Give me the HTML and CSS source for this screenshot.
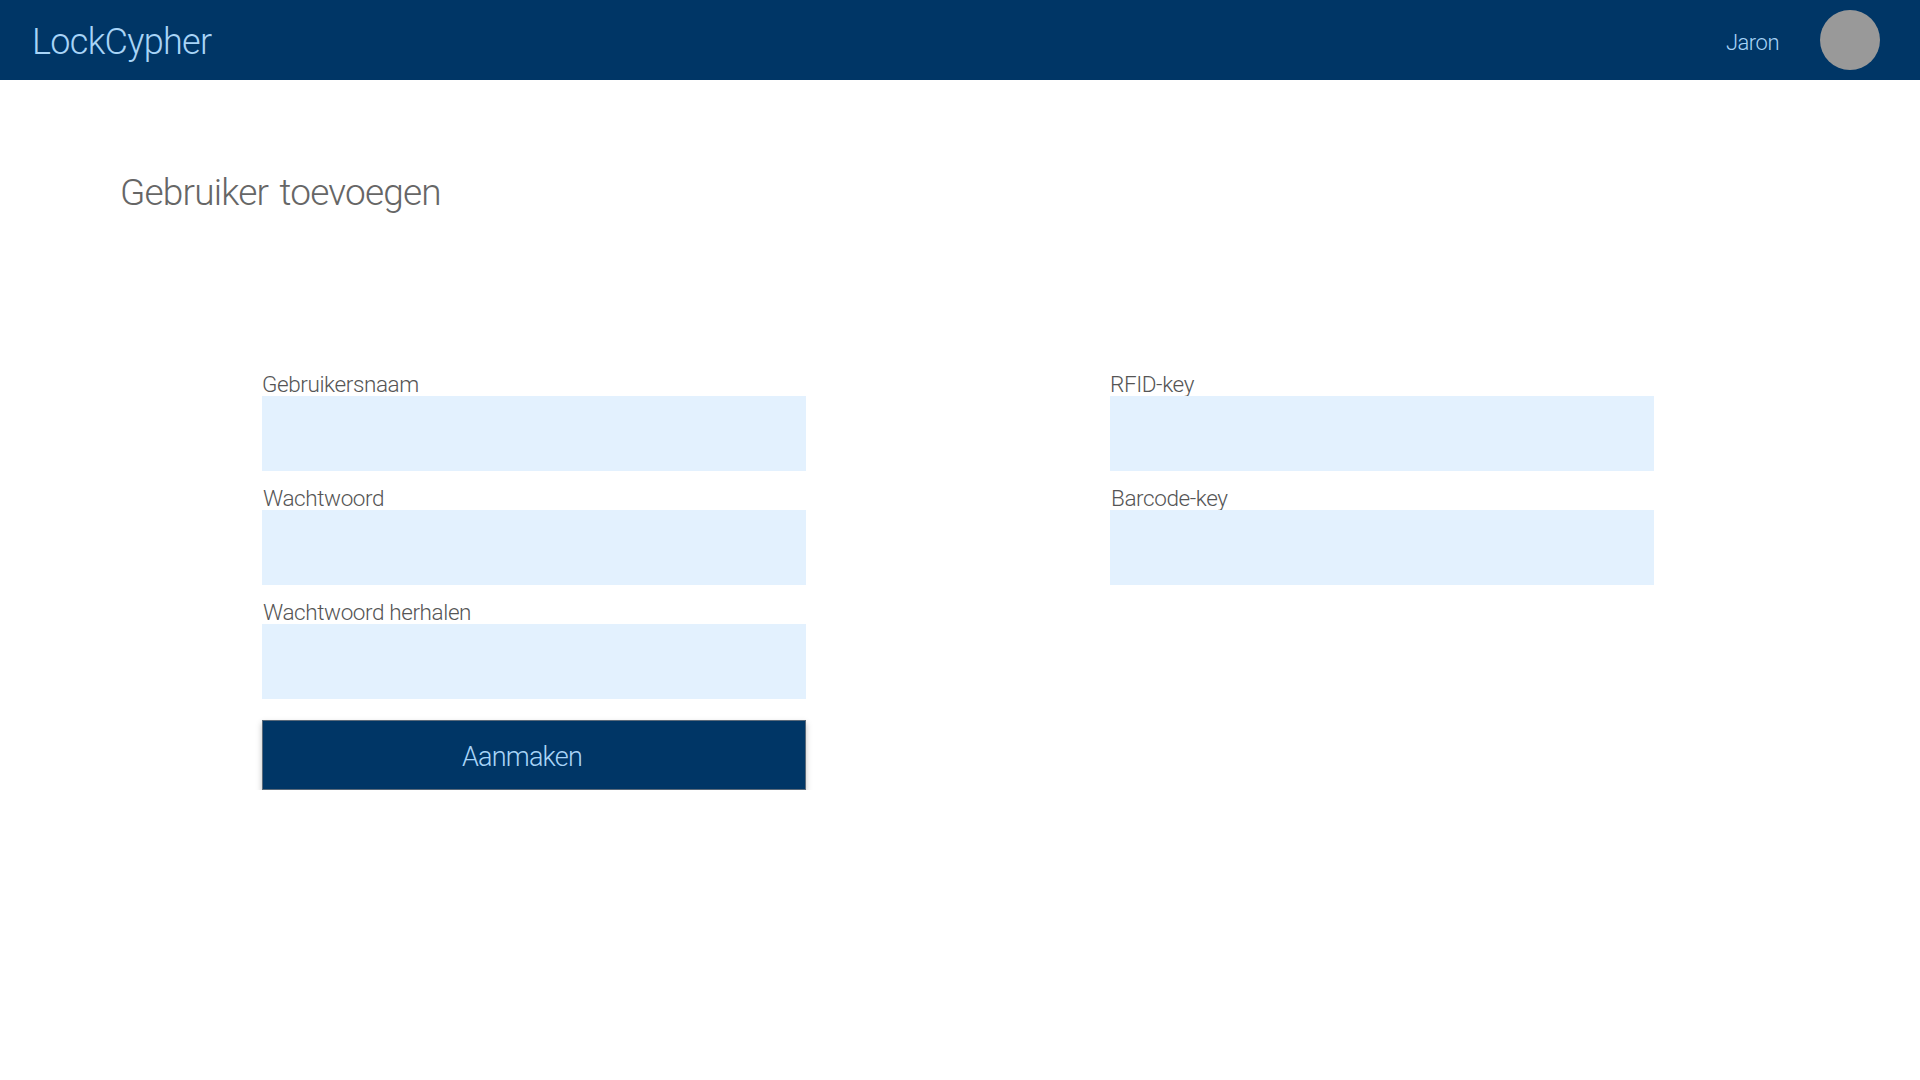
FILE: index.html
```html
<!DOCTYPE html>
<html lang="nl">
<head>
    <meta charset="UTF-8">
    <title>LockCypher | Gebruiker toevoegen</title>
    <link rel="stylesheet" href="styles.css">
</head>
<body>
    <header class="topbar">
        <div class="logo">LockCypher</div>
        <div class="user">
            <span class="user-name">Jaron</span>
            <div class="avatar"></div>
        </div>
    </header>
    <main class="content">
        <h1 class="title">Gebruiker toevoegen</h1>
        <form class="user-form">
            <div class="col">
                <div class="field">
                    <label for="username">Gebruikersnaam</label>
                    <input type="text" id="username">
                </div>
                <div class="field shifted">
                    <label for="password">Wachtwoord</label>
                    <input type="password" id="password">
                </div>
                <div class="field shifted">
                    <label for="password-repeat">Wachtwoord herhalen</label>
                    <input type="password" id="password-repeat">
                </div>
                <button class="submit" type="button">Aanmaken</button>
            </div>
            <div class="col">
                <div class="field">
                    <label for="rfid">RFID-key</label>
                    <input type="text" id="rfid">
                </div>
                <div class="field shifted">
                    <label for="barcode">Barcode-key</label>
                    <input type="text" id="barcode">
                </div>
            </div>
        </form>
    </main>
</body>
</html>
```

FILE: styles.css
```css
* {
    margin: 0;
    padding: 0;
    box-sizing: border-box;
}
body {
    background: #fff;
    font-family: Roboto, sans-serif;
    font-weight: 300;
}
.topbar {
    height: 80px;
    background: #003666;
    color: #a8d4f7;
    display: flex;
    align-items: center;
    justify-content: space-between;
    padding: 0 40px 0 32px;
}
.logo {
    font-size: 36px;
    letter-spacing: -0.7px;
    padding-top: 4px;
}
.user {
    display: flex;
    align-items: center;
    gap: 41px;
}
.user-name {
    font-size: 22px;
    letter-spacing: -0.5px;
    padding-top: 4px;
}
.avatar {
    width: 60px;
    height: 60px;
    border-radius: 50%;
    background: #999;
}
.content {
    padding: 88px 0 0 120px;
}
.title {
    font-size: 37px;
    font-weight: 300;
    letter-spacing: -0.8px;
    word-spacing: 3px;
    color: #666;
    line-height: 50px;
}
.user-form {
    display: flex;
    gap: 304px;
    margin: 148px 0 0 142px;
}
.col {
    width: 544px;
}
.field {
    display: flex;
    flex-direction: column;
    margin-bottom: 9px;
}
.field label {
    font-size: 22.5px;
    letter-spacing: -0.4px;
    line-height: 30px;
    padding-top: 3px;
    height: 30px;
    color: #555;
}
.field.shifted label {
    padding-left: 1px;
}
.field input {
    height: 75px;
    border: none;
    outline: none;
    background: #e3f1fe;
}
.submit {
    display: block;
    width: 100%;
    height: 70px;
    margin-top: 21px;
    padding: 3px 24px 0 0;
    border: 1px solid #5a6a7a;
    background: #003666;
    color: #a8d4f7;
    font-family: inherit;
    font-weight: 300;
    font-size: 27px;
    letter-spacing: -0.8px;
    box-shadow: 0 3px 6px rgba(0, 0, 0, .25);
}
```
